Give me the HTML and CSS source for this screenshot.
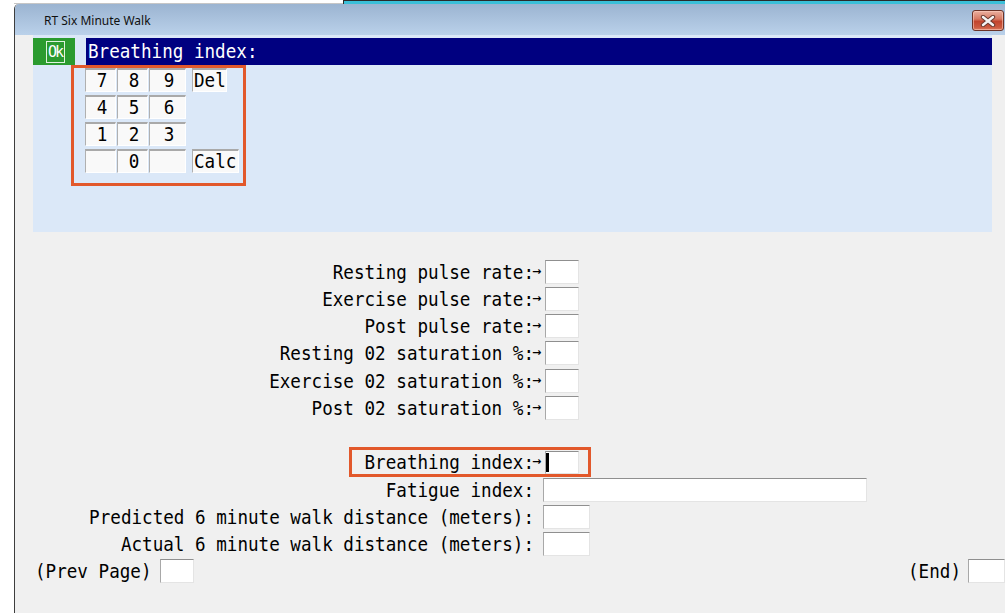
FILE: index.html
```html
<!DOCTYPE html>
<html lang="en">
<head>
<meta charset="utf-8">
<title>RT Six Minute Walk</title>
<link rel="stylesheet" href="styles.css">
</head>
<body>
<div class="screen">
  <div class="topline">
    <div class="topline-left"></div>
    <div class="topline-right"></div>
  </div>
  <div class="window">
    <div class="titlebar">
      <span class="title">RT Six Minute Walk</span>
      <button class="close" aria-label="Close">
        <svg width="16" height="12" viewBox="0 0 16 12">
          <path d="M3 2 L13 10 M13 2 L3 10" stroke="#6a3a30" stroke-width="4.4" stroke-linecap="round"/>
          <path d="M3 2 L13 10 M13 2 L3 10" stroke="#f4f4f4" stroke-width="2.4" stroke-linecap="round"/>
        </svg>
      </button>
    </div>

    <div class="client">
      <section class="prompt-panel">
        <div class="prompt-head">
          <div class="ok"><span class="ok-label">Ok</span></div>
          <div class="prompt-bar"><span class="tall">Breathing index:</span></div>
        </div>
        <div class="keypad">
          <div class="key"><span class="tall">7</span></div><div class="key"><span class="tall">8</span></div><div class="key"><span class="tall">9</span></div><div class="key key-wide"><span class="tall">Del</span></div>
          <div class="key"><span class="tall">4</span></div><div class="key"><span class="tall">5</span></div><div class="key"><span class="tall">6</span></div><div class="key-gap"></div>
          <div class="key"><span class="tall">1</span></div><div class="key"><span class="tall">2</span></div><div class="key"><span class="tall">3</span></div><div class="key-gap"></div>
          <div class="key"></div><div class="key"><span class="tall">0</span></div><div class="key"></div><div class="key key-calc"><span class="tall">Calc</span></div>
        </div>
        <div class="mark mark-keypad"></div>
      </section>

      <section class="form">
        <div class="field"><span class="label tall">Resting pulse rate:</span><span class="arrow">→</span><span class="box box-s"></span></div>
        <div class="field"><span class="label tall">Exercise pulse rate:</span><span class="arrow">→</span><span class="box box-s"></span></div>
        <div class="field"><span class="label tall">Post pulse rate:</span><span class="arrow">→</span><span class="box box-s"></span></div>
        <div class="field"><span class="label tall">Resting 02 saturation %:</span><span class="arrow">→</span><span class="box box-s"></span></div>
        <div class="field"><span class="label tall">Exercise 02 saturation %:</span><span class="arrow">→</span><span class="box box-s"></span></div>
        <div class="field"><span class="label tall">Post 02 saturation %:</span><span class="arrow">→</span><span class="box box-s"></span></div>
        <div class="field field-blank"></div>
        <div class="field field-active"><span class="label tall">Breathing index:</span><span class="arrow">→</span><span class="box box-s"><span class="caret"></span></span><div class="mark mark-field"></div></div>
        <div class="field"><span class="label tall">Fatigue index:</span><span class="arrow"></span><span class="box box-plain box-l"></span></div>
        <div class="field"><span class="label tall">Predicted 6 minute walk distance (meters):</span><span class="arrow"></span><span class="box box-plain box-m"></span></div>
        <div class="field"><span class="label tall">Actual 6 minute walk distance (meters):</span><span class="arrow"></span><span class="box box-plain box-m"></span></div>
      </section>

      <div class="pager">
        <span class="pager-item"><span class="pager-text tall">(Prev Page)</span><span class="box box-s"></span></span>
        <span class="pager-item pager-end"><span class="pager-text tall">(End)</span><span class="box box-end"></span></span>
      </div>
    </div>
  </div>
</div>
</body>
</html>
```

FILE: styles.css
```css
* { box-sizing: border-box; }

html, body {
  margin: 0;
  padding: 0;
}

body {
  width: 1005px;
  height: 613px;
  overflow: hidden;
  background: #ffffff;
  font-family: "DejaVu Sans Mono", "Liberation Mono", monospace;
  color: #000;
}

.screen {
  height: 613px;
  display: flex;
  flex-direction: column;
}

/* terminal glyphs are narrow and tall */
.tall {
  display: inline-block;
  transform: scaleY(1.14);
  transform-origin: 50% 55%;
}

/* strip above the dialog: desktop edge and the window behind */
.topline {
  height: 4px;
  flex: none;
  display: flex;
  margin-left: 14px;
}
.topline-left {
  width: 329px;
  border-bottom: 1px solid #c6c6c6;
}
.topline-right {
  flex: 1;
  background: #3bbfd8;
  border-top: 1px solid #2b2b2b;
  border-left: 1px solid #2b2b2b;
}

.window {
  flex: 1;
  margin-left: 14px;
  border-left: 1px solid #3e3e3e;
  border-top-left-radius: 5px;
  overflow: hidden;
  display: flex;
  flex-direction: column;
}

.titlebar {
  height: 31px;
  flex: none;
  display: flex;
  align-items: flex-start;
  background: linear-gradient(#9bb4d1, #bad1ea);
  padding-left: 29px;
}
.title {
  font-family: "Noto Sans", "Liberation Sans", sans-serif;
  font-size: 12px;
  line-height: 16px;
  margin-top: 9px;
  color: #101010;
}
.close {
  margin-left: auto;
  margin-right: 1px;
  margin-top: 6px;
  width: 32px;
  height: 21px;
  padding: 0;
  border: 1px solid #6b3328;
  border-radius: 3px;
  background: linear-gradient(#eab0a0 0%, #d77a64 42%, #c2452e 55%, #cc5a40 85%, #dc7a5e 100%);
  display: flex;
  align-items: center;
  justify-content: center;
  box-shadow: inset 0 0 0 1px rgba(255, 210, 195, 0.55);
}

.client {
  flex: 1;
  background: #f0f0f0;
  display: flex;
  flex-direction: column;
}

/* prompt panel with the on-screen keypad */
.prompt-panel {
  position: relative;
  margin-left: 18px;
  width: 959px;
  height: 197px;
  flex: none;
  background: #dbe8f8;
  padding-top: 3px;
}
.prompt-head {
  display: flex;
  height: 27px;
}
.ok {
  width: 42px;
  background: #2b9b2f;
  display: flex;
  align-items: center;
  justify-content: center;
  padding-left: 2px;
}
.ok-label {
  border: 1px solid #dff3df;
  width: 19px;
  height: 22px;
  color: #fff;
  font-size: 15px;
  line-height: 20px;
  text-align: center;
  letter-spacing: -2px;
}
.prompt-bar {
  flex: 1;
  margin-left: 11px;
  background: #000080;
  color: #fff;
  font-size: 17.6px;
  line-height: 27px;
  padding-left: 2px;
}

.keypad {
  margin-left: 52px;
  margin-top: 3px;
  display: grid;
  grid-template-columns: 31px 31px 37px 52px;
  grid-auto-rows: 24px;
  column-gap: 1px;
  row-gap: 3px;
  width: max-content;
}
.key {
  background: #f9f9f9;
  border-top: 2px solid #a9a9a9;
  border-left: 1px solid #b0b0b0;
  border-right: 1px solid #ffffff;
  border-bottom: 1px solid #ffffff;
  font-size: 17.6px;
  line-height: 21px;
  text-align: center;
  padding-left: 3px;
}
.key-wide,
.key-calc {
  margin-left: 5px;
  text-align: left;
  padding-left: 1px;
}
.key-wide { width: 35px; }
.key-calc { width: 47px; }

/* orange callout frames */
.mark {
  position: absolute;
  border: 3px solid #e2582b;
  pointer-events: none;
}
.mark-keypad {
  left: 38px;
  top: 30px;
  width: 175px;
  height: 121px;
}

/* data entry rows */
.form {
  margin-top: 26px;
  flex: none;
}
.field {
  position: relative;
  display: grid;
  grid-template-columns: 519px 11px auto;
  align-items: center;
  height: 27.25px;
  font-size: 17.6px;
}
.label {
  text-align: right;
  white-space: pre;
  line-height: 22px;
}
.arrow {
  font-family: "DejaVu Sans", sans-serif;
  font-size: 11px;
  font-weight: bold;
  line-height: 22px;
  text-align: left;
  margin-left: -2px;
}
.box {
  display: block;
  height: 24px;
  background: #fff;
  border-top: 1px solid #8f8f8f;
  border-left: 1px solid #a8a8a8;
  border-right: 1px solid #e4e4e4;
  border-bottom: 1px solid #e4e4e4;
}
.box-plain { margin-left: -2px; }
.box-s { width: 34px; }
.box-m { width: 47px; }
.box-l { width: 324px; }
.box-end { width: 37px; }

.field-active .box { height: 23px; }
.caret {
  display: block;
  width: 3px;
  height: 19px;
  margin-top: 1px;
  background: #000;
}
.mark-field {
  left: 334px;
  top: -2px;
  width: 242px;
  height: 30px;
}

.pager {
  display: flex;
  align-items: center;
  height: 27.25px;
  padding-left: 20px;
  font-size: 17.6px;
  flex: none;
}
.pager-item {
  display: flex;
  align-items: center;
}
.pager-text { line-height: 22px; margin-right: 8px; }
.pager-end { margin-left: auto; }
.pager-end .pager-text { margin-right: 7px; }
.pager .box { height: 24px; }
```
